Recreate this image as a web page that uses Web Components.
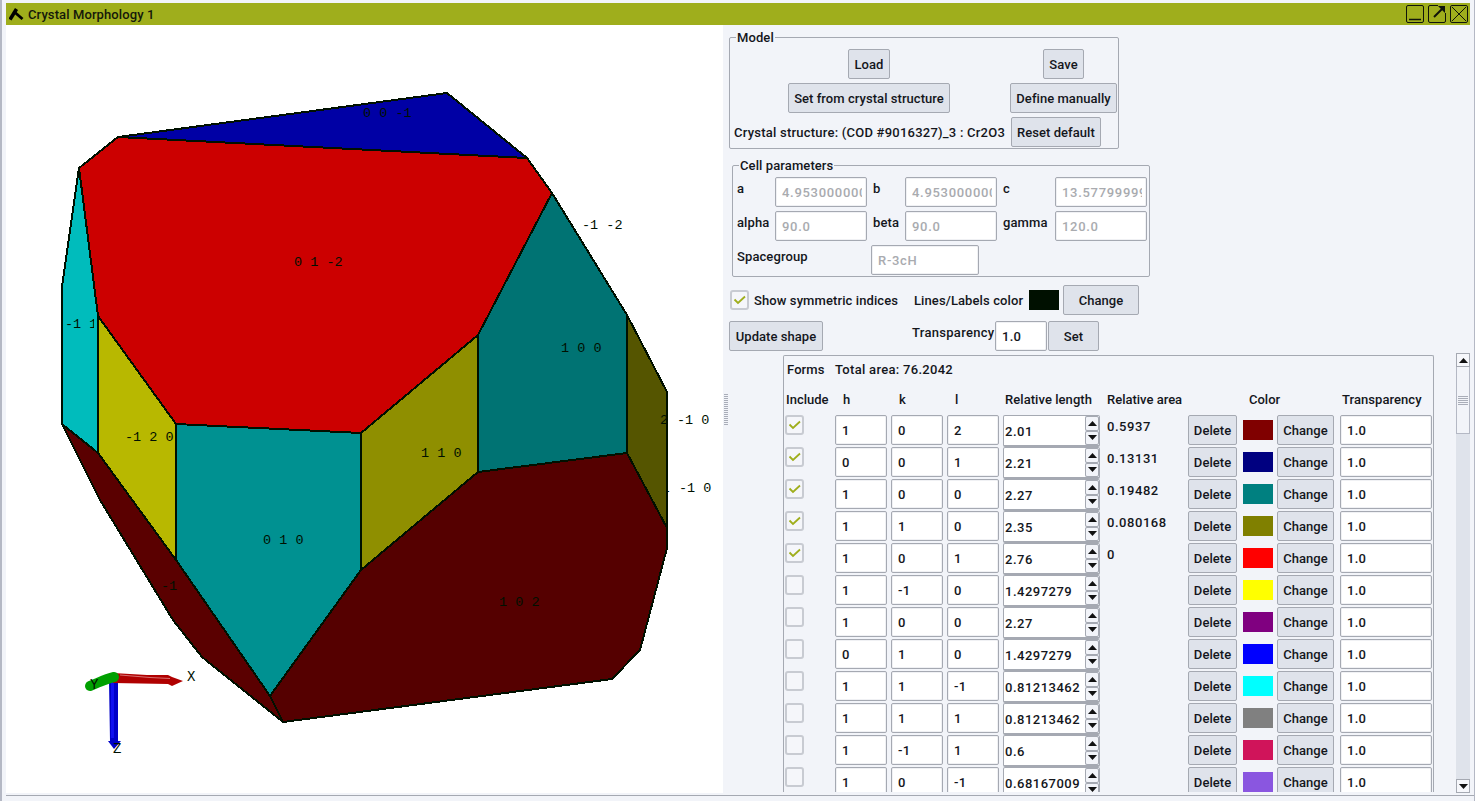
<!DOCTYPE html>
<html>
<head>
<meta charset="utf-8">
<title>Crystal Morphology 1</title>
<style>
    html, body { margin: 0; padding: 0; background: #f2f4f9; overflow: hidden; }
    body { font: 500 13px Roboto, "Liberation Sans", sans-serif; color: #14161c; letter-spacing: .1px; }
</style>
</head>
<body>
<app-window>
    <crystal-view slot="canvas"></crystal-view>
    <side-panel slot="panel"></side-panel>
</app-window>

<script>
const ROWS = [
    { on: true, h: '1', k: '0', l: '2', len: '2.01', area: '0.5937', color: '#800000' },
    { on: true, h: '0', k: '0', l: '1', len: '2.21', area: '0.13131', color: '#000080' },
    { on: true, h: '1', k: '0', l: '0', len: '2.27', area: '0.19482', color: '#008080' },
    { on: true, h: '1', k: '1', l: '0', len: '2.35', area: '0.080168', color: '#808000' },
    { on: true, h: '1', k: '0', l: '1', len: '2.76', area: '0', color: '#ff0000' },
    { h: '1', k: '-1', l: '0', len: '1.4297279', color: '#ffff00' },
    { h: '1', k: '0', l: '0', len: '2.27', color: '#800080' },
    { h: '0', k: '1', l: '0', len: '1.4297279', color: '#0000ff' },
    { h: '1', k: '1', l: '-1', len: '0.81213462', color: '#00ffff' },
    { h: '1', k: '1', l: '1', len: '0.81213462', color: '#808080' },
    { h: '1', k: '-1', l: '1', len: '0.6', color: '#d0145a' },
    { h: '1', k: '0', l: '-1', len: '0.68167009', color: '#8a56e0' }
];

const GRID_COLUMNS = '51px 56px 56px 56px 97px 88px 55px 34px 63px 92px';

class AppWindow extends HTMLElement {
    constructor() {
        super();
        this.attachShadow({ mode: 'open' });
        this.shadowRoot.innerHTML = `
            <style>
                :host { display: block; width: 1475px; height: 801px; box-sizing: border-box; padding: 3px 5px 0 6px; position: relative; overflow: hidden; }
                .edge-left { position: absolute; left: 0; top: 0; bottom: 0; width: 2px; background: #b4b8c4; }
                .edge-right { position: absolute; right: 0; top: 0; bottom: 0; width: 1px; background: #b4b8c4; }
                .edge-bottom { position: absolute; left: 6px; right: 1px; top: 795px; height: 1px; background: #a5a9b2; }
                .bar { display: flex; align-items: center; height: 22px; background: #9fae1c; padding: 0 2px 0 3px; }
                .logo { width: 15px; height: 14px; margin-right: 4px; }
                .title { flex: 1; color: #14180a; white-space: nowrap; }
                .win { width: 18px; height: 18px; margin-left: 4px; display: block; }
                .body { display: flex; height: 768px; }
                .canvas { width: 717px; flex: none; background: #fff; }
                .split { width: 6px; flex: none; display: flex; align-items: center; }
                .grip { width: 4px; height: 31px; margin: 0 0 0 1px; background: repeating-linear-gradient(#a9adb8 0 1px, transparent 1px 2px); }
                .panel { flex: 1; min-width: 0; }
            </style>
            <div class="edge-left"></div><div class="edge-right"></div><div class="edge-bottom"></div>
            <div class="bar">
                <svg class="logo" viewBox="0 0 15 14"><path d="M1 12.5 L7.5 2" fill="none" stroke="#000" stroke-width="3.6"/><path d="M6 5.5 L13.5 12" fill="none" stroke="#000" stroke-width="2.8"/></svg>
                <span class="title">Crystal Morphology 1</span>
                <svg class="win" viewBox="0 0 18 18"><rect x=".5" y=".5" width="17" height="17" rx="1.5" fill="none" stroke="#10140a"/><path d="M3 14.5 H15" stroke="#10140a" stroke-width="1.5"/></svg>
                <svg class="win" viewBox="0 0 18 18"><path d="M10 .5 H2 Q.5 .5 .5 2 V16 Q.5 17.5 2 17.5 H16 Q17.5 17.5 17.5 16 V8" fill="none" stroke="#10140a"/><path d="M6 12 L15 3" stroke="#10140a" stroke-width="2"/><path d="M10 1 H17 V8 Z" fill="#10140a"/></svg>
                <svg class="win" viewBox="0 0 18 18"><rect x=".5" y=".5" width="17" height="17" rx="1.5" fill="none" stroke="#10140a"/><path d="M2 2 L16 16 M16 2 L2 16" stroke="#10140a"/></svg>
            </div>
            <div class="body">
                <div class="canvas"><slot name="canvas"></slot></div>
                <div class="split"><div class="grip"></div></div>
                <div class="panel"><slot name="panel"></slot></div>
            </div>
        `;
    }
}

class CrystalView extends HTMLElement {
    constructor() {
        super();
        this.attachShadow({ mode: 'open' });
        this.shadowRoot.innerHTML = `
            <style>
                :host { display: block; width: 717px; height: 768px; overflow: hidden; }
                svg { display: block; }
                .f { stroke: #001000; stroke-width: 2; stroke-linejoin: round; shape-rendering: crispEdges; }
                text { font: 400 13.5px "Liberation Mono", monospace; letter-spacing: 0; fill: #001000; white-space: pre; }
            </style>
            <svg width="717" height="768" viewBox="6 25 717 768">
                <defs>
                    <clipPath id="c2"><rect x="650" y="400" width="18" height="40"/></clipPath>
                    <clipPath id="c1"><rect x="667" y="470" width="3" height="30"/></clipPath>
                    <clipPath id="c3"><rect x="60" y="310" width="34" height="30"/></clipPath>
                </defs>
                <polygon class="f" fill="#0000a5" points="118,137 447,93 527,158"/>
                <text x="363" y="117">0 0 -1</text>
                <polygon class="f" fill="#00bcbc" points="79,168 98,316 98,453 62,424 62,287"/>
                <text x="65" y="328" clip-path="url(#c3)">-1 1</text>
                <polygon class="f" fill="#b8b800" points="98,316 176,424 176,560 98,453"/>
                <polygon class="f" fill="#009191" points="176,424 361,433 361,570 270,696 176,560"/>
                <polygon class="f" fill="#8f8f00" points="361,433 478,335 478,472 361,570"/>
                <polygon class="f" fill="#007373" points="552,193 627,315 627,453 478,472 478,335"/>
                <polygon class="f" fill="#555500" points="627,315 667,392 667,528 627,453"/>
                <polygon class="f" fill="#550000" points="361,570 478,472 627,453 667,528 667,548 640,650 612,679 283,722 270,696"/>
                <polygon class="f" fill="#5a0000" stroke-width="1" points="62,424 98,453 176,560 270,696 283,722 202,657 173,620 100,500"/>
                <polygon class="f" fill="#cc0000" points="118,137 527,158 552,193 478,335 361,433 176,424 98,316 79,168"/>
                <text x="294" y="266">0 1 -2</text>
                <text x="582" y="229">-1 -2</text>
                <text x="561" y="352">1 0 0</text>
                <text x="660" y="424" clip-path="url(#c2)">2</text>
                <text x="677" y="424">-1 0</text>
                <text x="661.5" y="492" clip-path="url(#c1)">1</text>
                <text x="679" y="492">-1 0</text>
                <text x="421" y="457">1 1 0</text>
                <text x="125" y="441">-1 2 0</text>
                <text x="263" y="544">0 1 0</text>
                <text x="161" y="590">-1</text>
                <text x="499" y="606">1 0 2</text>
                <polygon fill="#0000c8" points="109,680 118,680 118,741 121,741 114,749 108,741 110,741"/>
                <rect x="111" y="680" width="3" height="58" fill="#1010f0"/>
                <polygon fill="#b00000" points="113,673 147,675 168,675 172,677 183,681 172,686 168,684 113,683"/>
                <path d="M120,675 L150,677.5 L170,678.5" stroke="#d87070" stroke-width="1" fill="none"/>
                <path d="M114,677 C105,679 98,683 90,686" stroke="#00a000" stroke-width="10" stroke-linecap="round" fill="none"/>
                <text x="90" y="689" style="font-size:14px">Y</text>
                <text x="187" y="681" style="font-size:14px">X</text>
                <text x="113" y="753" style="font-size:14px">Z</text>
            </svg>
        `;
    }
}

class UiButton extends HTMLElement {
    constructor() {
        super();
        this.attachShadow({ mode: 'open' });
        this.shadowRoot.innerHTML = `
            <style>
                :host { display: flex; align-items: center; justify-content: center; box-sizing: border-box; height: 30px; padding: 0 5px; background: #dfe3eb; border: 1px solid #a5a9b2; border-radius: 2px; white-space: nowrap; letter-spacing: .05px; }
            </style>
            <slot></slot>
        `;
    }
}

class UiField extends HTMLElement {
    constructor() {
        super();
        this.attachShadow({ mode: 'open' });
        this.shadowRoot.innerHTML = `
            <style>
                :host { display: block; box-sizing: border-box; width: 52px; height: 30px; padding: 0 4px 0 6px; background: #fff; border: 1px solid #a5a9b2; border-radius: 2px; box-shadow: inset 0 0 0 1px #f0f1f4; letter-spacing: .3px; }
                :host([disabled]) { color: #a9abaf; letter-spacing: .7px; }
                div { height: 100%; display: flex; align-items: center; overflow: hidden; white-space: nowrap; }
            </style>
            <div><slot></slot></div>
        `;
    }
}

class UiCheck extends HTMLElement {
    constructor() {
        super();
        this.attachShadow({ mode: 'open' });
        this.shadowRoot.innerHTML = `
            <style>
                :host { display: flex; align-items: center; gap: 5px; white-space: nowrap; }
                .box { box-sizing: border-box; width: 19px; height: 20px; border: 2px solid #c8cbd2; border-radius: 3px; background: #f5f6fa; flex: none; }
                svg { display: none; width: 15px; height: 16px; }
                :host([checked]) svg { display: block; }
            </style>
            <div class="box"><svg viewBox="0 0 15 16"><path d="M2.5 7.5 L6 11 L13 4.5" fill="none" stroke="#9fae1c" stroke-width="1.8"/></svg></div>
            <slot></slot>
        `;
    }
}

class SpinBox extends HTMLElement {
    constructor() {
        super();
        this.attachShadow({ mode: 'open' });
        this.shadowRoot.innerHTML = `
            <style>
                :host { display: flex; box-sizing: border-box; width: 97px; height: 32px; background: #fff; border: 1px solid #a5a9b2; border-bottom-width: 2px; border-radius: 2px; }
                .val { flex: 1; display: flex; align-items: center; padding: 2px 0 0 1px; overflow: hidden; white-space: nowrap; letter-spacing: .5px; }
                .arrows { flex: none; width: 14px; background: #dfe3eb; display: flex; flex-direction: column; }
                .arrow { flex: 1; box-sizing: border-box; background: #f2f4f9; border: 1px solid #a5a9b2; border-radius: 2px; display: flex; align-items: center; justify-content: center; }
                svg { width: 9px; height: 5px; display: block; }
            </style>
            <div class="val"><slot></slot></div>
            <div class="arrows">
                <div class="arrow"><svg viewBox="0 0 9 5"><path d="M0 5 L4.5 0 L9 5 Z" fill="#111"/></svg></div>
                <div class="arrow"><svg viewBox="0 0 9 5"><path d="M0 0 L4.5 5 L9 0 Z" fill="#111"/></svg></div>
            </div>
        `;
    }
}

class GroupBox extends HTMLElement {
    constructor() {
        super();
        this.attachShadow({ mode: 'open' });
        this.shadowRoot.innerHTML = `
            <style>
                :host { display: block; box-sizing: border-box; position: relative; height: 112px; padding-top: 11px; border: 1px solid #a5a9b2; border-radius: 2px; }
                .legend { position: absolute; left: 6px; top: -8px; height: 16px; line-height: 16px; background: #f2f4f9; padding: 0 1px; }
            </style>
            <div class="legend"><slot name="legend"></slot></div>
            <slot></slot>
        `;
    }
}

class ScrollBar extends HTMLElement {
    constructor() {
        super();
        this.attachShadow({ mode: 'open' });
        this.shadowRoot.innerHTML = `
            <style>
                :host { display: flex; flex-direction: column; box-sizing: border-box; width: 14px; height: 440px; background: #dfe3eb; }
                .btn { height: 14px; flex: none; box-sizing: border-box; background: #f6f7fb; border: 1px solid #a5a9b2; display: flex; align-items: center; justify-content: center; }
                .btn svg { width: 9px; height: 5px; display: block; }
                .thumb { height: 67px; flex: none; box-sizing: border-box; background: #f2f4f9; border: 1px solid #b4b8c4; border-top: 0; display: flex; align-items: center; justify-content: center; }
                .grip { width: 10px; height: 9px; background: repeating-linear-gradient(#a9adb8 0 1px, transparent 1px 2px); }
                .track { flex: 1; }
            </style>
            <div class="btn"><svg viewBox="0 0 9 5"><path d="M0 5 L4.5 0 L9 5 Z" fill="#111"/></svg></div>
            <div class="thumb"><div class="grip"></div></div>
            <div class="track"></div>
            <div class="btn"><svg viewBox="0 0 9 5"><path d="M0 0 L4.5 5 L9 0 Z" fill="#111"/></svg></div>
        `;
    }
}

class FormRow extends HTMLElement {
    constructor() {
        super();
        this.attachShadow({ mode: 'open' });
    }

    connectedCallback() {
        const { on, h, k, l, len, area, color } = this.data;
        this.shadowRoot.innerHTML = `
            <style>
                :host { display: grid; grid-template-columns: ${GRID_COLUMNS}; height: 32px; justify-items: start; align-items: start; }
                ui-check { margin-left: 1px; }
                .area { padding-left: 7px; line-height: 24px; letter-spacing: .55px; }
                .swatch { width: 30px; height: 20px; margin-top: 5px; }
                ui-button { width: 49px; }
                .chg { width: 57px; }
                .tr { width: 92px; }
            </style>
            <ui-check ${on ? 'checked' : ''}></ui-check>
            <ui-field>${h}</ui-field>
            <ui-field>${k}</ui-field>
            <ui-field>${l}</ui-field>
            <spin-box>${len}</spin-box>
            <div class="area">${area || ''}</div>
            <ui-button>Delete</ui-button>
            <div class="swatch" style="background:${color}"></div>
            <ui-button class="chg">Change</ui-button>
            <ui-field class="tr">1.0</ui-field>
        `;
    }
}

class FormsTable extends HTMLElement {
    constructor() {
        super();
        this.attachShadow({ mode: 'open' });
        this.shadowRoot.innerHTML = `
            <style>
                :host { display: block; box-sizing: border-box; width: 651px; height: 437px; margin-top: 2px; padding-top: 6px; border: 1px solid #a5a9b2; border-bottom: 0; border-radius: 2px 2px 0 0; overflow: hidden; }
                .top { display: flex; height: 16px; line-height: 16px; padding-left: 3px; }
                .top span:first-child { width: 48px; }
                .top span:last-child { letter-spacing: .3px; }
                .head { display: grid; grid-template-columns: ${GRID_COLUMNS}; height: 16px; line-height: 16px; margin: 14px 0 7px; white-space: nowrap; letter-spacing: 0; }
                .head div:nth-child(1) { padding-left: 2px; }
                .head div:nth-child(2), .head div:nth-child(3), .head div:nth-child(4) { padding-left: 8px; }
                .head div:nth-child(5), .head div:nth-child(10) { padding-left: 2px; letter-spacing: .06px; }
                .head div:nth-child(6) { padding-left: 7px; }
                .head div:nth-child(8) { padding-left: 6px; }
            </style>
            <div class="top"><span>Forms</span><span>Total area: 76.2042</span></div>
            <div class="head">
                <div>Include</div><div>h</div><div>k</div><div>l</div><div>Relative length</div><div>Relative area</div><div></div><div>Color</div><div></div><div>Transparency</div>
            </div>
            <div class="rows"></div>
        `;
        const rows = this.shadowRoot.querySelector('.rows');
        ROWS.forEach(data => {
            const row = document.createElement('form-row');
            row.data = data;
            rows.appendChild(row);
        });
    }
}

class SidePanel extends HTMLElement {
    constructor() {
        super();
        this.attachShadow({ mode: 'open' });
        this.shadowRoot.innerHTML = `
            <style>
                :host { display: block; box-sizing: border-box; height: 768px; padding-top: 12px; }
                .model { width: 390px; }
                .model .grid { display: grid; grid-template-columns: 278px 105px; column-gap: 3px; grid-auto-rows: 30px; row-gap: 4px; }
                .model .c { justify-self: center; }
                .model .load { width: 42px; }
                .model .s { justify-self: start; }
                .model .t { align-self: center; padding-left: 4px; white-space: nowrap; letter-spacing: .23px; }
                .cell { width: 418px; margin: 16px 0 0 3px; }
                .cell .grid { display: grid; grid-template-columns: 42px 92px 38px 92px 58px 92px; grid-auto-rows: 30px; row-gap: 4px; }
                .cell .l { line-height: 24px; padding-left: 6px; white-space: nowrap; }
                .cell .l.first { padding-left: 4px; }
                .cell ui-field { width: 92px; }
                .cell .sg { grid-column: 1 / -1; display: flex; }
                .cell .sg .l { width: 138px; box-sizing: border-box; }
                .cell .sg ui-field { width: 108px; }
                .opts { display: flex; align-items: center; height: 30px; margin-top: 8px; }
                .opts ui-check { width: 184px; margin-left: 1px; }
                .opts .t { width: 115px; white-space: nowrap; }
                .opts .swatch { width: 30px; height: 20px; background: #001000; margin-right: 4px; }
                .opts ui-button { width: 76px; }
                .upd { display: flex; height: 30px; margin-top: 6px; }
                .upd .u { width: 94px; }
                .upd .t { width: 83px; margin-left: 89px; line-height: 24px; white-space: nowrap; letter-spacing: .3px; }
                .upd ui-field { width: 52px; }
                .upd .s { width: 51px; margin-left: 1px; }
                .forms { display: flex; margin: 2px 0 0 54px; height: 440px; }
                scroll-bar { margin-left: 22px; }
            </style>
            <group-box class="model">
                <span slot="legend">Model</span>
                <div class="grid">
                    <ui-button class="c load">Load</ui-button><ui-button class="c">Save</ui-button>
                    <ui-button class="c">Set from crystal structure</ui-button><ui-button class="c">Define manually</ui-button>
                    <div class="t">Crystal structure: (COD #9016327)_3 : Cr2O3</div><ui-button class="s">Reset default</ui-button>
                </div>
            </group-box>
            <group-box class="cell">
                <span slot="legend">Cell parameters</span>
                <div class="grid">
                    <div class="l first">a</div><ui-field disabled>4.953000000</ui-field>
                    <div class="l">b</div><ui-field disabled>4.953000000</ui-field>
                    <div class="l">c</div><ui-field disabled>13.57799999</ui-field>
                    <div class="l first">alpha</div><ui-field disabled>90.0</ui-field>
                    <div class="l">beta</div><ui-field disabled>90.0</ui-field>
                    <div class="l">gamma</div><ui-field disabled>120.0</ui-field>
                    <div class="sg"><div class="l first">Spacegroup</div><ui-field disabled>R-3cH</ui-field></div>
                </div>
            </group-box>
            <div class="opts">
                <ui-check checked>Show symmetric indices</ui-check>
                <div class="t">Lines/Labels color</div>
                <div class="swatch"></div>
                <ui-button>Change</ui-button>
            </div>
            <div class="upd">
                <ui-button class="u">Update shape</ui-button>
                <div class="t">Transparency</div>
                <ui-field>1.0</ui-field>
                <ui-button class="s">Set</ui-button>
            </div>
            <div class="forms">
                <forms-table></forms-table>
                <scroll-bar></scroll-bar>
            </div>
        `;
    }
}

customElements.define('ui-button', UiButton);
customElements.define('ui-field', UiField);
customElements.define('ui-check', UiCheck);
customElements.define('spin-box', SpinBox);
customElements.define('group-box', GroupBox);
customElements.define('scroll-bar', ScrollBar);
customElements.define('form-row', FormRow);
customElements.define('forms-table', FormsTable);
customElements.define('side-panel', SidePanel);
customElements.define('crystal-view', CrystalView);
customElements.define('app-window', AppWindow);
</script>
</body>
</html>
